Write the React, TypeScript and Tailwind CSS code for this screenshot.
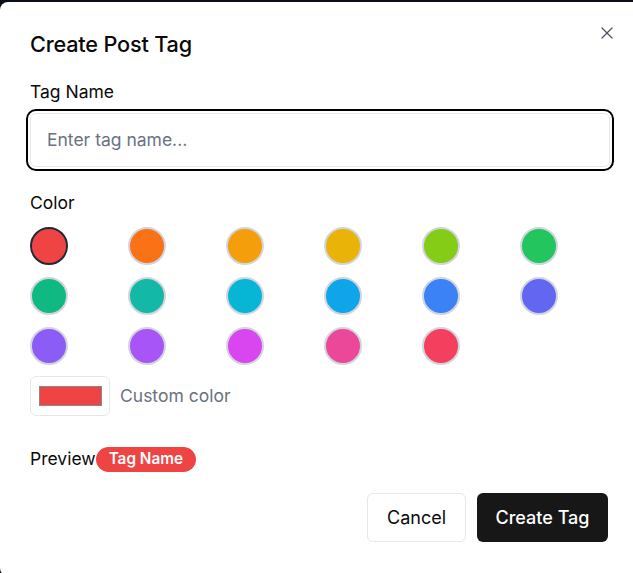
import React from "react";
import { X } from "lucide-react";

const colors = [
  "#ef4444", "#f97316", "#f59e0b", "#eab308", "#84cc16", "#22c55e",
  "#10b981", "#14b8a6", "#06b6d4", "#0ea5e9", "#3b82f6", "#6366f1",
  "#8b5cf6", "#a855f7", "#d946ef", "#ec4899", "#f43f5e",
];

export default function App() {
  return (
    <div
      className="w-[633px] h-[573px] overflow-hidden bg-[#0b0f17] pt-[2px]"
      style={{ fontFamily: "Inter, 'Noto Sans', sans-serif" }}
    >
      <div className="relative w-[640px] h-[574px] rounded-lg bg-white px-[30px] pt-[28px] text-[#0a0a0a]">
        <button className="absolute right-[23px] top-[21px] text-gray-600">
          <X size={20} strokeWidth={1.5} />
        </button>
        <h2 className="text-[21.7px] leading-7 font-medium tracking-[-0.2px]">Create Post Tag</h2>

        <div className="mt-[22px] text-[17.5px] leading-6">Tag Name</div>
        <div className="mt-[9px] h-[54px] rounded-md border border-gray-200 outline-2 outline-black outline-offset-2 flex items-center px-[16px]">
          <span className="text-[17.5px] text-gray-500">Enter tag name...</span>
        </div>

        <div className="mt-[24px] text-[17.5px] leading-6">Color</div>
        <div className="mt-[12px] grid grid-cols-6 gap-x-2 gap-y-[12px]">
          {colors.map((c, i) => (
            <div
              key={c}
              className={
                i === 0
                  ? "w-[38px] h-[38px] rounded-full border-2 border-[#1f2937]"
                  : "w-[38px] h-[38px] rounded-full border-2 border-gray-300"
              }
              style={{ backgroundColor: c }}
            />
          ))}
        </div>

        <div className="mt-[11px] flex items-center gap-[10px]">
          <div className="w-[80px] h-[40px] rounded-md border border-gray-200 flex items-center justify-center">
            <div className="w-[63px] h-[20px] bg-[#ef4444] border border-[#8a8a8a]" />
          </div>
          <span className="text-[17.5px] text-gray-500">Custom color</span>
        </div>

        <div className="mt-[31px] flex items-center h-[25px]">
          <span className="text-[17.5px]">Preview</span>
          <span className="h-[25px] px-[13px] rounded-full bg-[#ef4444] text-white text-[15.3px] font-semibold flex items-center">
            Tag Name
          </span>
        </div>

        <div className="mt-[21px] flex justify-end gap-[11px] pr-[2px]">
          <button className="w-[99px] h-[49px] rounded-md border border-gray-200 bg-white text-lg text-[#0a0a0a]">
            Cancel
          </button>
          <button className="w-[131px] h-[49px] rounded-md bg-[#171717] text-lg font-medium text-white">
            Create Tag
          </button>
        </div>
      </div>
    </div>
  );
}
